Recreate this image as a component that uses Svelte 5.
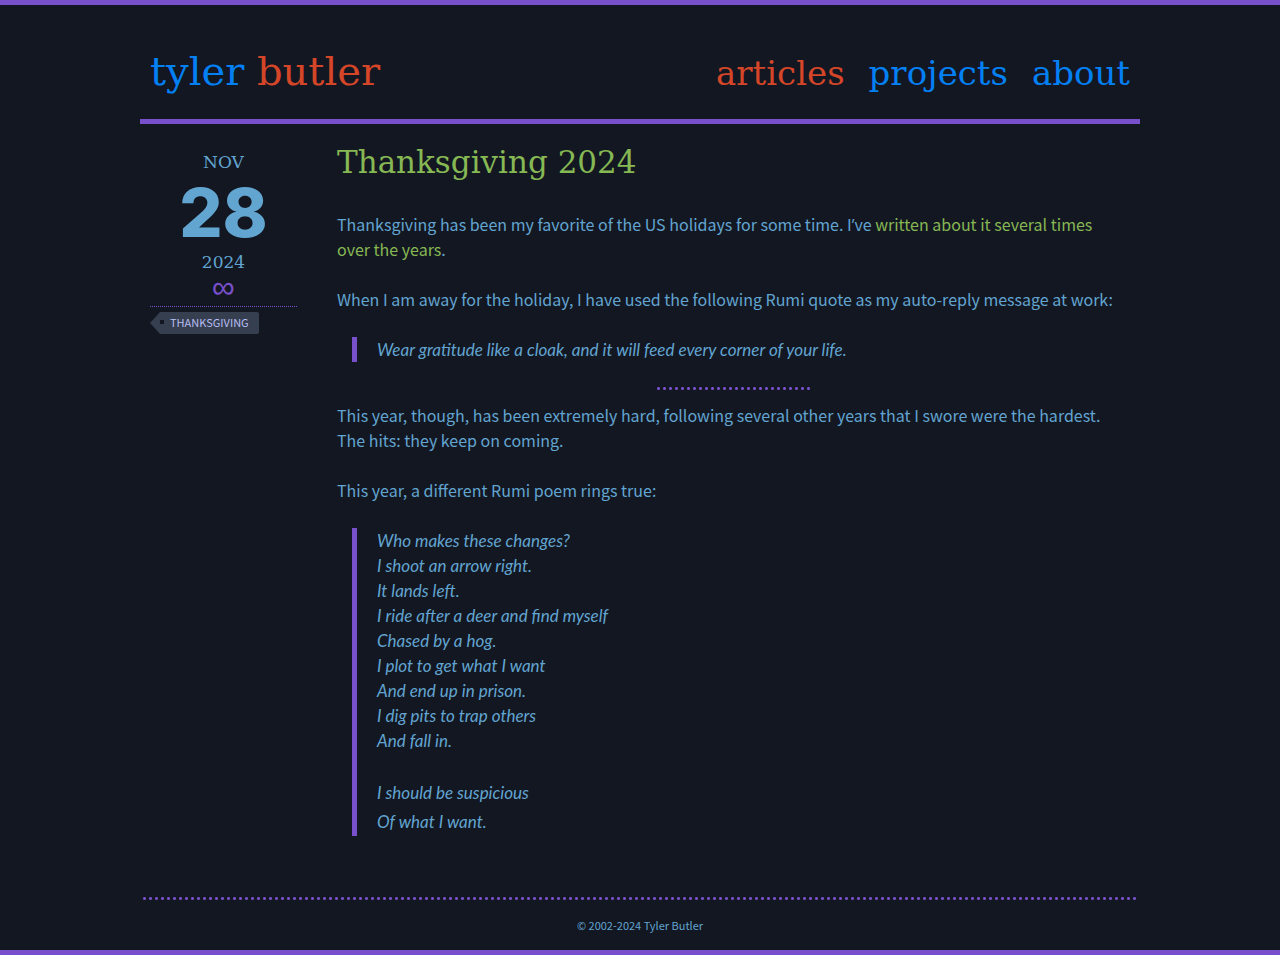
<script>
  const nav = [
    { label: 'articles', active: true },
    { label: 'projects', active: false },
    { label: 'about', active: false }
  ];
  const poem = [
    'Who makes these changes?',
    'I shoot an arrow right.',
    'It lands left.',
    'I ride after a deer and find myself',
    'Chased by a hog.',
    'I plot to get what I want',
    'And end up in prison.',
    'I dig pits to trap others',
    'And fall in.'
  ];
</script>

<div class="page">
  <header>
    <a class="logo" href="#home">tyler <span>butler</span></a>
    <nav>
      {#each nav as item}
        <a href="#{item.label}" class:active={item.active}>{item.label}</a>
      {/each}
    </nav>
  </header>

  <main>
    <aside>
      <time datetime="2024-11-28">
        <span class="small">NOV</span>
        <span class="day">28</span>
        <span class="small">2024</span>
      </time>
      <a class="permalink" href="#permalink">∞</a>
      <div class="tags"><a class="tag" href="#thanksgiving">THANKSGIVING</a></div>
    </aside>

    <article>
      <h1>Thanksgiving 2024</h1>
      <p>
        Thanksgiving has been my favorite of the US holidays for some time. I<span class="mark">’</span>ve
        <a href="#written">written about it several times over the years</a>.
      </p>
      <p>When I am away for the holiday, I have used the following Rumi quote as my auto-reply message at work:</p>
      <blockquote><p>Wear gratitude like a cloak, and it will feed every corner of your life.</p></blockquote>
      <hr />
      <p>
        This year, though, has been extremely hard, following several other years that I swore were the hardest.
        The hits: they keep on coming.
      </p>
      <p>This year, a different Rumi poem rings true:</p>
      <blockquote>
        <p>{#each poem as line}{line}<br />{/each}</p>
        <p class="closing">I should be suspicious<br />Of what I want.</p>
      </blockquote>
    </article>
  </main>

  <footer>© 2002-2024 Tyler Butler</footer>
</div>

<style>
  :global(body) {
    margin: 0;
    background: #131722;
  }
  .page {
    box-sizing: border-box;
    min-height: 100vh;
    border-top: 5px solid #7950cb;
    border-bottom: 5px solid #7950cb;
    color: #62a5d1;
    font: 16px/25px 'Noto Sans CJK SC', 'Open Sans', sans-serif;
    display: flex;
    flex-direction: column;
  }
  a {
    color: #86b853;
    text-decoration: none;
  }
  header,
  main,
  footer {
    box-sizing: border-box;
    width: 100%;
    max-width: 1000px;
    margin: 0 auto;
  }
  header {
    display: flex;
    flex-wrap: wrap;
    justify-content: space-between;
    align-items: baseline;
    padding: 36px 10px 16px;
    border-bottom: 5px solid #7950cb;
    font-family: 'DejaVu Serif', serif;
    line-height: 60px;
  }
  header a {
    color: #0480f5;
  }
  .logo {
    font-size: 40px;
  }
  .logo span,
  nav .active {
    color: #d54628;
  }
  nav {
    display: flex;
    gap: 24px;
    font-size: 34px;
  }
  main {
    display: grid;
    grid-template-columns: 147px 1fr;
    gap: 40px;
    padding: 13px 10px 0;
  }
  aside {
    padding-top: 12px;
    text-align: center;
  }
  time {
    display: flex;
    flex-direction: column;
  }
  .small {
    padding-top: 1px;
    font: 17px/25px 'DejaVu Serif', serif;
  }
  .day {
    font: 800 68px/74px Inter, sans-serif;
  }
  .permalink {
    display: block;
    padding-bottom: 6px;
    font: 32px/25px 'Liberation Sans', sans-serif;
    color: #7950cb;
    border-bottom: 1px dotted #7950cb;
  }
  .tags {
    display: flex;
    padding-top: 5px;
  }
  .tag {
    position: relative;
    margin-left: 10px;
    padding: 0 10px 2px;
    background: #353f4f;
    border-radius: 0 2px 2px 0;
    color: #b9bdf5;
    font-size: 11px;
    line-height: 20px;
  }
  .tag::before {
    content: '';
    position: absolute;
    left: -10px;
    top: 0;
    border: solid transparent;
    border-width: 11px 10px 11px 0;
    border-right-color: #353f4f;
  }
  .tag::after {
    content: '';
    position: absolute;
    left: 0;
    top: 8px;
    width: 4px;
    height: 4px;
    background: #131722;
  }
  h1 {
    margin: 0 0 25px;
    color: #86b853;
    font: 31px/50px 'DejaVu Serif', serif;
  }
  p {
    margin: 0 0 25px;
  }
  article > p {
    padding-right: 5px;
  }
  .mark {
    font-family: 'Open Sans', sans-serif;
    line-height: 0;
  }
  blockquote {
    margin: 0 0 25px 15px;
    padding-left: 20px;
    border-left: 5px solid #7950cb;
    font-family: Lato, sans-serif;
    font-size: 17px;
    font-style: italic;
  }
  blockquote p:last-child {
    margin: 0;
  }
  .closing {
    line-height: 29px;
  }
  hr,
  footer::before {
    height: 3px;
    border: 0;
    background: radial-gradient(circle at 25% 50%, #7950cb 1px, transparent 2px) 0 0 / 6px 3px;
  }
  hr {
    width: 154px;
    margin: 0 auto 13px;
  }
  footer {
    margin-top: auto;
    text-align: center;
    font-size: 11px;
    line-height: 20px;
    padding-bottom: 15px;
  }
  footer::before {
    content: '';
    display: block;
    margin: 0 3px 15px;
  }
</style>
